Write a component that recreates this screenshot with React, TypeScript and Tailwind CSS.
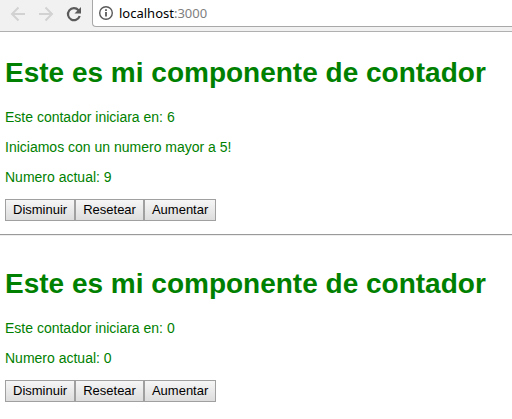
import { useState } from "react";

function BrowserBar() {
  return (
    <header className="flex h-8 items-start border-b border-[#b0b0b0] bg-[#f1f1f1] pl-2 font-['Noto_Sans',sans-serif]">
      <nav className="flex h-[27px] items-center gap-2">
        <button aria-label="Atrás" className="flex size-5 items-center justify-center">
          <svg width="16" height="16" viewBox="0 0 16 16" fill="none" stroke="#d2d2d2" strokeWidth="2">
            <path d="M15 8H2.5M8.5 1.5 2 8l6.500 6.500" />
          </svg>
        </button>
        <button aria-label="Adelante" className="flex size-5 items-center justify-center">
          <svg width="16" height="16" viewBox="0 0 16 16" fill="none" stroke="#d2d2d2" strokeWidth="2">
            <path d="M1 8h12.500M7.500 1.500 14 8l-6.500 6.500" />
          </svg>
        </button>
        <button aria-label="Recargar" className="flex size-5 items-center justify-center">
          <svg width="16" height="16" viewBox="0 0 16 16">
            <path d="M12.500 4.200A6 6 0 1 0 13.700 10" fill="none" stroke="#5a5a5a" strokeWidth="2.200" />
            <path d="M15 1v6.500H8.500z" fill="#5a5a5a" />
          </svg>
        </button>
      </nav>
      <div className="ml-2 flex h-[27px] flex-1 items-center gap-[5px] rounded-bl-sm border-b border-l border-[#a8a8a8] bg-white pl-[5px]">
        <svg width="16" height="16" viewBox="0 0 16 16" fill="none" stroke="#5a5a5a">
          <circle cx="8" cy="8" r="6.300" strokeWidth="1.400" />
          <path d="M8 7v4.500M8 4.200V6" strokeWidth="1.800" />
        </svg>
        <span className="text-[13px] leading-4 text-black">
          localhost<span className="text-[#808080]">:3000</span>
        </span>
      </div>
    </header>
  );
}

const buttonStyle =
  "h-[22px] border border-[#a0a0a0] bg-linear-to-b from-[#f6f6f6] to-[#dddddd] px-[7px] text-[13px] leading-4 text-black";

function Contador({ inicio, actual }: { inicio: number; actual: number }) {
  const [numero, setNumero] = useState(actual);
  return (
    <section className="px-[5px] text-[14px] leading-4 text-[#008000]">
      <h1 className="text-[28px] leading-8 font-bold">Este es mi componente de contador</h1>
      <div className="mt-5 flex flex-col gap-[14px]">
        <p>Este contador iniciara en: {inicio}</p>
        {inicio > 5 && <p>Iniciamos con un numero mayor a 5!</p>}
        <p>Numero actual: {numero}</p>
      </div>
      <div className="mt-[14px] flex">
        <button className={buttonStyle} onClick={() => setNumero(numero - 1)}>Disminuir</button>
        <button className={buttonStyle} onClick={() => setNumero(inicio)}>Resetear</button>
        <button className={buttonStyle} onClick={() => setNumero(numero + 1)}>Aumentar</button>
      </div>
    </section>
  );
}

export default function App() {
  return (
    <div className="min-h-screen bg-white font-['Liberation_Sans',Arial,sans-serif]">
      <BrowserBar />
      <main className="pt-[25px]">
        <Contador inicio={6} actual={9} />
        <hr className="mt-[13px] mb-8 h-[2px] border-t border-b border-t-[#9a9a9a] border-b-[#eeeeee]" />
        <Contador inicio={0} actual={0} />
      </main>
    </div>
  );
}
